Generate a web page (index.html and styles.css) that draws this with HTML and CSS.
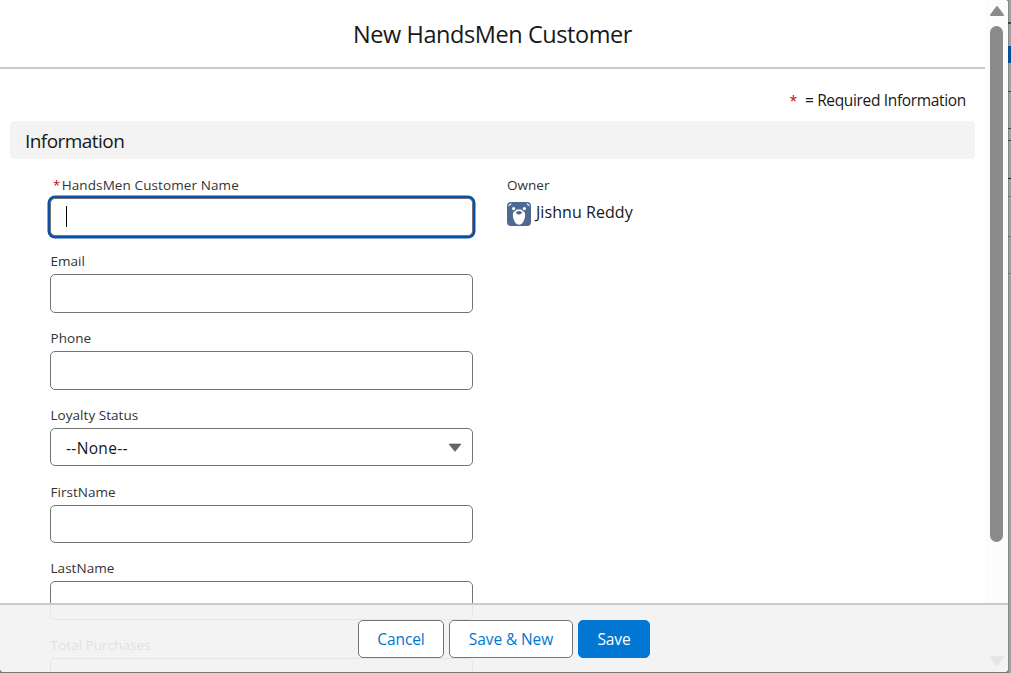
FILE: index.html
```html
<!DOCTYPE html>
<html lang="en">
<head>
<meta charset="utf-8">
<title>New HandsMen Customer</title>
<link rel="stylesheet" href="styles.css">
</head>
<body>
<div class="page">
  <main class="modal">
    <div class="content">
      <header class="header"><h1 class="title">New HandsMen Customer</h1></header>
      <p class="legend"><span class="star">*</span><span class="legend-text">= Required Information</span></p>
      <h2 class="section"><span>Information</span></h2>
      <form class="form">
        <div class="column">
          <div class="field"><div class="label required"><span class="star">*</span><span class="t-name">HandsMen Customer Name</span></div><div class="input focused"><i class="caret"></i></div></div>
          <div class="field"><div class="label">Email</div><div class="input"></div></div>
          <div class="field"><div class="label">Phone</div><div class="input"></div></div>
          <div class="field"><div class="label">Loyalty Status</div><div class="input select"><span>--None--</span><svg width="14" height="9" viewBox="0 0 14 9"><path d="M1 1h12L7 8.500z" fill="#666" stroke="#555" stroke-width=".6"/></svg></div></div>
          <div class="field"><div class="label">FirstName</div><div class="input"></div></div>
          <div class="field"><div class="label">LastName</div><div class="input"></div></div>
          <div class="field"><div class="label">Total Purchases</div><div class="input"></div></div>
        </div>
        <div class="owner">
          <div class="label">Owner</div>
          <div class="owner-row">
            <svg width="24" height="24" viewBox="0 0 24 24">
              <rect width="24" height="24" rx="4" fill="#4f6a92"/>
              <path d="M1 4.500Q1.500 1.500 4.500 1L4 3zM23 4.500Q22.500 1.500 19.500 1L20 3z" fill="#d5deea"/>
              <circle cx="6.600" cy="6.600" r="1.600" fill="#fff"/><circle cx="17.400" cy="6.600" r="1.600" fill="#fff"/>
              <path d="M12 7.500c3.800 0 6.200 2 6.100 5.500-.2 5-2.600 9.800-6.100 9.800S6.100 18 5.900 13C5.800 9.500 8.200 7.500 12 7.500z" fill="#fff"/>
              <path d="M9.200 9.900q2.800-1.700 5.600 0c.7 1.100-1.400 2.500-2.800 2.500s-3.500-1.400-2.800-2.500z" fill="#4f6a92"/>
              <circle cx="7.900" cy="8.800" r=".8" fill="#4f6a92"/><circle cx="16.100" cy="8.800" r=".8" fill="#4f6a92"/>
            </svg>
            <span>Jishnu Reddy</span>
          </div>
        </div>
      </form>
    </div>
    <aside class="scrollbar">
      <svg width="16" height="12" viewBox="0 0 16 12"><path d="M8 2L14 10H2z" fill="#8b8b8b" stroke="#8b8b8b" stroke-width="2" stroke-linejoin="round"/></svg>
      <div class="thumb"></div>
    </aside>
    <footer class="footer">
      <button class="button cancel" type="button"><span>Cancel</span></button>
      <button class="button save-new" type="button"><span>Save &amp; New</span></button>
      <button class="button primary" type="button"><span>Save</span></button>
      <svg class="down" width="16" height="12" viewBox="0 0 16 12"><path d="M8 10L14 2H2z" fill="#e5e5e5" stroke="#e5e5e5" stroke-width="2" stroke-linejoin="round"/></svg>
    </footer>
  </main>
  <div class="backdrop">
    <i class="mark m1"></i><i class="mark blue"></i><i class="mark m2"></i><i class="mark m3"></i><i class="mark m4"></i><i class="mark m5"></i><i class="mark m6"></i><i class="mark m7"></i><i class="mark m8"></i>
  </div>
</div>
</body>
</html>
```
FILE: styles.css
```css
* { box-sizing: border-box; }
body { margin: 0; background: #777; color: #181818; font-family: "Open Sans", "Noto Sans", sans-serif; font-size: 16px; }
.page { display: flex; width: 1011px; height: 673px; overflow: hidden; }
.modal { position: relative; display: flex; width: 1008px; height: 672px; background: #fff; border-radius: 0 3px 4px 4px; overflow: hidden; flex: none; }
.content { width: 985px; height: 672px; overflow: hidden; }
.header { height: 69px; border-bottom: 2px solid #c9c9c9; display: flex; justify-content: center; }
.title { margin: 0; font-size: 23.5px; line-height: 69px; font-weight: 400; letter-spacing: -.42px; white-space: nowrap; }
.legend { margin: 0; height: 52px; padding: 20px 19px 0 0; display: flex; justify-content: flex-end; line-height: 23px; font-size: 15.5px; letter-spacing: -.34px; white-space: nowrap; }
.star { color: #ba0517; }
.legend .star { margin-right: 8px; font-size: 14px; }
.section { margin: 0 10px; height: 38px; padding-left: 15px; background: #f3f3f3; border-radius: 5px; font-size: 19px; line-height: 40px; font-weight: 400; letter-spacing: -.55px; }
.form { display: flex; padding: 15.5px 0 0 50px; }
.column { width: 423px; margin-right: 34px; }
.field { height: 76.75px; }
.label { height: 23px; font-size: 13.5px; line-height: 21px; letter-spacing: .04px; color: #333; white-space: nowrap; }
.column .label { padding-left: .5px; }
.column .required { padding-left: 3px; }
.required .star { margin-right: 1.5px; font-size: 13px; }
.t-name { letter-spacing: .1px; }
.input { height: 38.5px; border: 1px solid #747474; border-radius: 5px; background: #fff; }
.focused { box-shadow: 0 0 0 2.5px #0b50a8; display: flex; align-items: center; padding-left: 15px; }
.caret { width: 1px; height: 21px; background: #000; }
.select { display: flex; align-items: center; justify-content: space-between; padding: 1px 10px 0 15px; font-size: 15.5px; letter-spacing: .35px; }
.owner-row { display: flex; gap: 5px; line-height: 28px; font-size: 16px; letter-spacing: .06px; white-space: nowrap; }
.owner-row svg { margin-top: 4px; }
.scrollbar { width: 23px; background: #fcfcfc; padding: 5px 0 0 3.5px; display: flex; flex-direction: column; }
.thumb { width: 13px; height: 516px; margin: 9px 0 0 1.5px; background: #8b8b8b; border-radius: 7px; }
.footer { position: absolute; left: 0; right: 0; bottom: 0; height: 69px; padding: 15px 0 0 358px; border-top: 2px solid #c9c9c9; background: rgba(242, 242, 242, .9); display: flex; gap: 5px; }
.button { height: 38px; padding: 0; border: 1px solid #747474; border-radius: 5px; background: #fff; color: #0176d3; font: 15.5px/36px "Open Sans", sans-serif; letter-spacing: -.1px; white-space: nowrap; }
.cancel { width: 86px; }
.save-new { width: 124px; }
.primary { width: 72px; color: #fff; background: #0176d3; border-color: #0176d3; }
.down { position: absolute; right: 3.5px; bottom: 5px; }
.backdrop { position: relative; width: 3px; height: 673px; background: #a1a1a1; border-left: 1px solid #888; flex: none; }
.mark { position: absolute; left: -1px; right: 0; height: 1px; background: #444; }
.m1 { top: 22px; height: 2px; }
.blue { top: 46px; height: 17px; background: #03509a; }
.m2 { top: 91px; }
.m3 { top: 128px; }
.m4 { top: 140px; }
.m5 { top: 178px; background: #222; }
.m6 { top: 196px; background: #777; }
.m7 { top: 236px; background: #666; }
.m8 { top: 273px; background: #777; }
```
